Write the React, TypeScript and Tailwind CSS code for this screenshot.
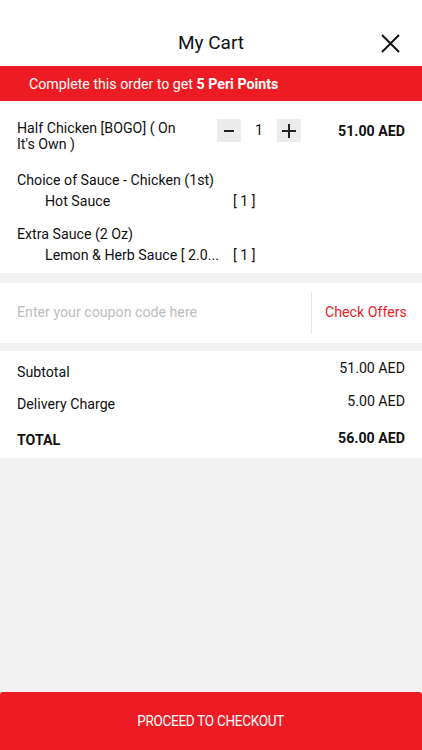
import React from "react";

export default function App() {
  const font = { fontFamily: "Roboto, 'Liberation Sans', sans-serif" };
  return (
    <div className="w-[422px] h-[750px] bg-[#f2f2f2] flex flex-col text-[#111]" style={font}>
      {/* Header */}
      <div className="h-[66px] bg-white relative flex items-center justify-center shrink-0">
        <span className="text-[19px] leading-none text-[#111] mt-[19px]">My Cart</span>
        <svg className="absolute left-[381px] top-[34px]" width="19" height="19" viewBox="0 0 19 19">
          <path d="M1 1 L18 18 M18 1 L1 18" stroke="#111" strokeWidth="2" fill="none" />
        </svg>
      </div>
      {/* Banner */}
      <div className="h-[35px] bg-[#ed1c24] flex items-center pl-[29px] pt-[3px] text-white text-[14.2px] shrink-0">
        <span>
          Complete this order to get <span className="font-bold">5 Peri Points</span>
        </span>
      </div>
      {/* Item */}
      <div className="bg-white pl-[17px] pr-[17px] pt-[19px] pb-[10px] shrink-0 text-[14.2px]">
        <div className="flex items-start">
          <div className="w-[175px] leading-[16px] text-[#111]">Half Chicken [BOGO] ( On It's Own )</div>
          <div className="flex items-center ml-[25px] -mt-[1px]">
            <div className="w-[24px] h-[23px] bg-[#ececec] flex items-center justify-center">
              <div className="w-[10px] h-[2px] bg-[#222]" />
            </div>
            <div className="w-[36px] text-center">1</div>
            <div className="w-[24px] h-[23px] bg-[#ececec] flex items-center justify-center relative">
              <div className="w-[14px] h-[2px] bg-[#222]" />
              <div className="absolute w-[2px] h-[14px] bg-[#222]" />
            </div>
          </div>
          <div className="flex-1 text-right font-bold leading-[16px] pt-[3px]">51.00 AED</div>
        </div>
        <div className="mt-[20px] leading-[16px]">Choice of Sauce - Chicken (1st)</div>
        <div className="flex leading-[16px] mt-[5px] pl-[28px]">
          <span className="w-[188px]">Hot Sauce</span>
          <span>[ 1 ]</span>
        </div>
        <div className="mt-[17px] leading-[16px]">Extra Sauce (2 Oz)</div>
        <div className="flex leading-[16px] mt-[5px] pl-[28px]">
          <span className="w-[188px]">Lemon &amp; Herb Sauce [ 2.0...</span>
          <span>[ 1 ]</span>
        </div>
      </div>
      {/* gap */}
      <div className="h-[10px] shrink-0" />
      {/* Coupon */}
      <div className="h-[60px] bg-white flex items-center shrink-0 text-[14.2px]">
        <div className="flex-1 pl-[17px] text-[#bdbdbd]">Enter your coupon code here</div>
        <div className="w-px h-[42px] bg-[#e6e6e6]" />
        <div className="w-[110px] pl-[13px] text-[#e8222a]">Check Offers</div>
      </div>
      <div className="h-[8px] shrink-0" />
      {/* Totals */}
      <div className="bg-white px-[17px] pt-[7px] shrink-0 text-[14.2px]">
        <div className="flex justify-between h-[33px]">
          <span className="mt-[4px]">Subtotal</span>
          <span>51.00 AED</span>
        </div>
        <div className="flex justify-between h-[37px]">
          <span className="mt-[3px]">Delivery Charge</span>
          <span>5.00 AED</span>
        </div>
        <div className="flex justify-between h-[30px] font-bold">
          <span className="mt-[2px]">TOTAL</span>
          <span>56.00 AED</span>
        </div>
      </div>
      <div className="flex-1" />
      {/* Button */}
      <div className="h-[58px] bg-[#ed1c24] rounded-t-[3px] flex items-center justify-center shrink-0">
        <span className="text-white text-[15px] tracking-[-0.3px] scale-x-[0.9]">PROCEED TO CHECKOUT</span>
      </div>
    </div>
  );
}
